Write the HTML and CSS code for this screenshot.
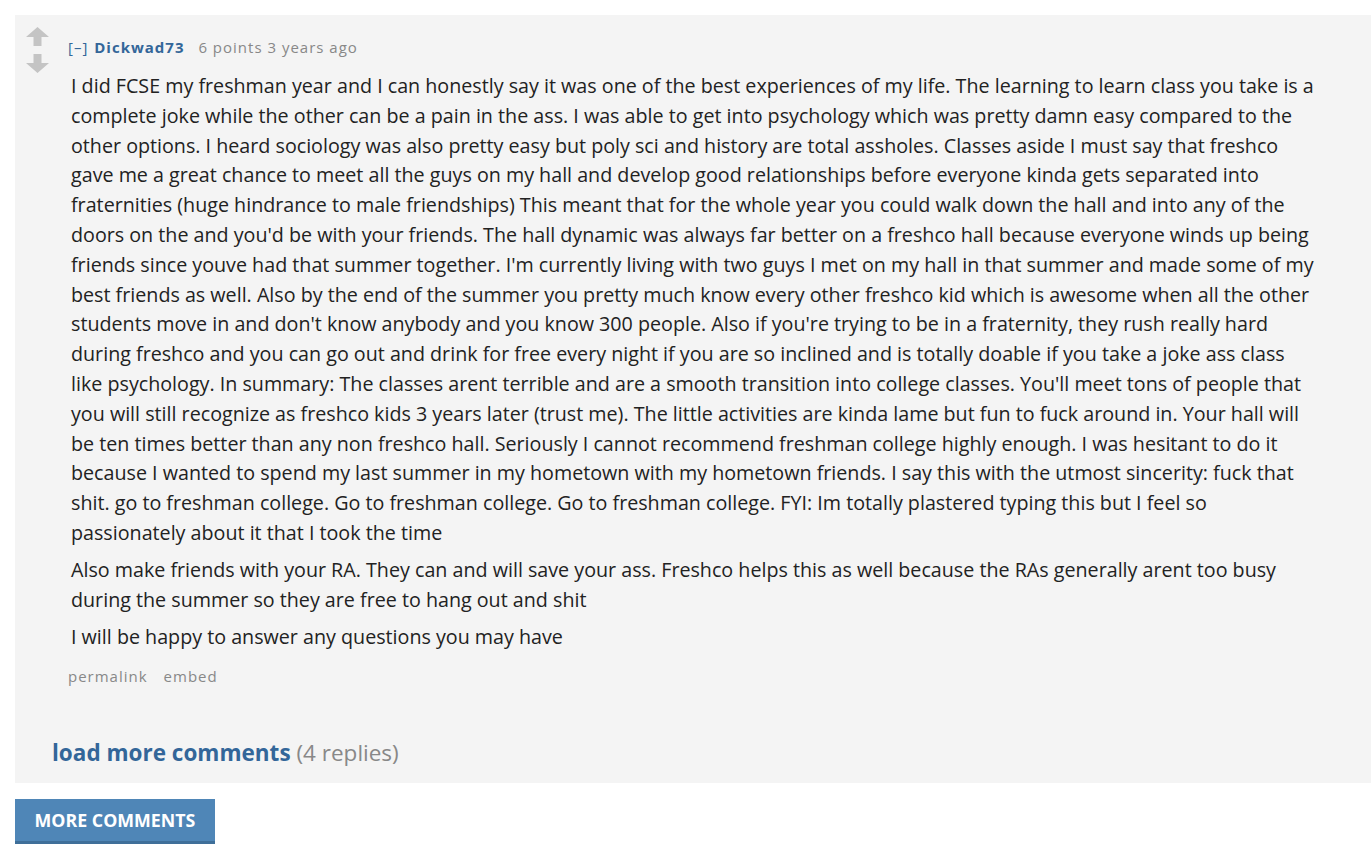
FILE: index.html
```html
<!DOCTYPE html>
<html>
<head>
<meta charset="utf-8">
<link rel="stylesheet" href="styles.css">
</head>
<body>
<div class="thread">
  <div class="comment">
    <div class="votes">
      <svg class="arrow" width="23" height="19" viewBox="0 0 23 19"><path d="M11.5 0 L23 10 L15.5 10 L15.5 19 L7.5 19 L7.5 10 L0 10 Z" fill="#c4c4c4"/></svg>
      <svg class="arrow" width="23" height="19" viewBox="0 0 23 19"><path d="M11.5 19 L23 9 L15.5 9 L15.5 0 L7.5 0 L7.5 9 L0 9 Z" fill="#c4c4c4"/></svg>
    </div>
    <div class="entry">
      <div class="tagline"><span class="expand">[–]</span> <span class="author">Dickwad73</span> <span class="score">6 points 3 years ago</span></div>
      <div class="body">
        <p>I did FCSE my freshman year and I can honestly say it was one of the best experiences of my life. The learning to learn class you take is a<br>complete joke while the other can be a pain in the ass. I was able to get into psychology which was pretty damn easy compared to the<br>other options. I heard sociology was also pretty easy but poly sci and history are total assholes. Classes aside I must say that freshco<br>gave me a great chance to meet all the guys on my hall and develop good relationships before everyone kinda gets separated into<br>fraternities (huge hindrance to male friendships) This meant that for the whole year you could walk down the hall and into any of the<br>doors on the and you'd be with your friends. The hall dynamic was always far better on a freshco hall because everyone winds up being<br>friends since youve had that summer together. I'm currently living with two guys I met on my hall in that summer and made some of my<br>best friends as well. Also by the end of the summer you pretty much know every other freshco kid which is awesome when all the other<br>students move in and don't know anybody and you know 300 people. Also if you're trying to be in a fraternity, they rush really hard<br>during freshco and you can go out and drink for free every night if you are so inclined and is totally doable if you take a joke ass class<br>like psychology. In summary: The classes arent terrible and are a smooth transition into college classes. You'll meet tons of people that<br>you will still recognize as freshco kids 3 years later (trust me). The little activities are kinda lame but fun to fuck around in. Your hall will<br>be ten times better than any non freshco hall. Seriously I cannot recommend freshman college highly enough. I was hesitant to do it<br>because I wanted to spend my last summer in my hometown with my hometown friends. I say this with the utmost sincerity: fuck that<br>shit. go to freshman college. Go to freshman college. Go to freshman college. FYI: Im totally plastered typing this but I feel so<br>passionately about it that I took the time</p>
        <p>Also make friends with your RA. They can and will save your ass. Freshco helps this as well because the RAs generally arent too busy<br>during the summer so they are free to hang out and shit</p>
        <p>I will be happy to answer any questions you may have</p>
      </div>
      <ul class="buttons"><li>permalink</li><li>embed</li></ul>
    </div>
  </div>
  <div class="more"><span class="more-link">load more comments</span> <span class="count">(4 replies)</span></div>
</div>
<button class="more-btn">MORE COMMENTS</button>
</body>
</html>
```
FILE: styles.css
```css
html, body { margin: 0; padding: 0; background: #fff; }
body { padding: 15px 0 0 15px; font-family: "Open Sans", "Noto Sans", sans-serif; overflow: hidden; }
.thread { background: #f4f4f4; width: 1356px; padding: 12px 0 15px 0; box-sizing: border-box; }
.comment { display: flex; }
.votes { width: 53px; flex: none; display: flex; flex-direction: column; align-items: flex-start; gap: 8px; padding-left: 11px; box-sizing: border-box; }
.arrow { display: block; }
.entry { flex: 1; min-width: 0; }
.tagline { font-size: 15px; letter-spacing: 1px; color: #888; margin-top: 11px; line-height: 18px; }
.expand { color: #369; letter-spacing: 1px; }
.author { color: #369; font-weight: bold; margin: 0 9px 0 1px; }
.body { color: #222; font-size: 19.7px; line-height: 29.8px; padding-left: 3px; margin-top: 15px; }
.body p { margin: 0 0 7.5px 0; }
.buttons { list-style: none; margin: 14px 0 0 0; padding: 0; display: flex; gap: 16px; font-size: 15px; letter-spacing: 1px; color: #888; }
.more { margin: 51px 0 0 37px; font-size: 22.5px; }
.more-link { color: #336699; font-weight: bold; }
.count { color: #888; }
.more-btn { display: block; margin-top: 16px; width: 200px; height: 45px; background: #4f86b7; border: 0; border-bottom: 3px solid #3f6f99; color: #fff; font-family: "Open Sans", sans-serif; font-weight: bold; font-size: 17.8px; padding: 0; }
```
